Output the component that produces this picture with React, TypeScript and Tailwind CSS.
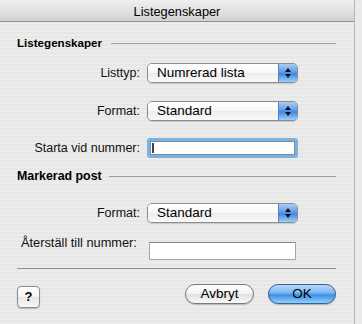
import React from "react";

const font = { fontFamily: '"Liberation Sans", Arial, sans-serif' };

function Popup({ text }: { text: string }) {
  return (
    <div className="flex h-[20px] w-[151px] rounded-[5px] border border-[#8c8c8c] overflow-hidden shadow-[0_1px_1px_rgba(0,0,0,0.15)]">
      <div className="flex-1 flex items-center pl-[9px] text-[13.5px] text-black bg-[linear-gradient(#ffffff,#f7f7f7_50%,#ececec_51%,#fafafa)]">
        {text}
      </div>
      <div className="w-[19px] flex flex-col items-center justify-center gap-[2px] border-l border-[#5a7fb6] bg-[linear-gradient(#a9cdf5,#5d9be8_45%,#3f86e3_55%,#9ad0fb)]">
        <div className="w-0 h-0 border-l-[3px] border-r-[3px] border-b-[4px] border-l-transparent border-r-transparent border-b-[#111]" />
        <div className="w-0 h-0 border-l-[3px] border-r-[3px] border-t-[4px] border-l-transparent border-r-transparent border-t-[#111]" />
      </div>
    </div>
  );
}

function Label({ children }: { children: React.ReactNode }) {
  return <div className="text-right text-[12.5px] text-[#111] whitespace-nowrap">{children}</div>;
}

export default function App() {
  return (
    <div className="w-[362px] h-[324px] flex bg-[#e9e9e9]" style={font}>
      <div className="w-[355px] h-full flex flex-col border-r border-[#b5b5b5] bg-[repeating-linear-gradient(0deg,#ececec_0px,#ececec_2px,#e7e7e7_2px,#e7e7e7_4px)]">
        <div className="h-[22px] shrink-0 flex items-center justify-center pt-[2px] border-b border-[#8e8e8e] bg-[linear-gradient(#efefef,#e2e2e2_50%,#d2d2d2)] text-[12.8px] text-black">
          Listegenskaper
        </div>
        <div className="flex flex-col pl-[17px] pr-[18px]">
          <div className="mt-[13px] h-[16px] flex items-center">
            <span className="font-bold text-[11.6px] text-black">Listegenskaper</span>
            <div className="flex-1 ml-[9px] h-px bg-[#9c9c9c]" />
          </div>

          <div className="mt-[12px] flex items-center">
            <div className="w-[123px]"><Label>Listtyp:</Label></div>
            <div className="ml-[7px]"><Popup text="Numrerad lista" /></div>
          </div>

          <div className="mt-[18px] flex items-center">
            <div className="w-[123px]"><Label>Format:</Label></div>
            <div className="ml-[7px]"><Popup text="Standard" /></div>
          </div>

          <div className="mt-[17px] flex items-center">
            <div className="w-[123px]"><Label>Starta vid nummer:</Label></div>
            <div className="ml-[7px] w-[151px] h-[20px] rounded-[3px] bg-[#80b0dc] p-[3px]">
              <div className="h-full bg-white border border-[#6d8fb5] flex items-center pl-[1px]">
                <div className="w-[2px] h-[10px] bg-[#444]" />
              </div>
            </div>
          </div>

          <div className="mt-[10px] h-[16px] flex items-center">
            <span className="font-bold text-[12.4px] text-black">Markerad post</span>
            <div className="flex-1 ml-[7px] h-px bg-[#9c9c9c]" />
          </div>

          <div className="mt-[19px] flex items-center">
            <div className="w-[123px]"><Label>Format:</Label></div>
            <div className="ml-[7px]"><Popup text="Standard" /></div>
          </div>

          <div className="mt-[19px] flex items-start">
            <div className="w-[132px] -mt-[7px] pl-[4px] text-[12.8px] text-[#111] leading-[15px] whitespace-nowrap">Återställ till nummer:</div>
            <div className="w-[147px] h-[18px] bg-white border border-[#a5a5a5] border-t-[#8a8a8a]" />
          </div>

          <div className="mt-[8px] h-px bg-[#8e8e8e]" />

          <div className="mt-[15px] flex items-start">
            <div className="mt-[2px] w-[23px] h-[22px] rounded-[4px] border border-[#8a8a8a] bg-[linear-gradient(#ffffff,#f4f4f4_50%,#e6e6e6_51%,#f6f6f6)] flex items-center justify-center font-bold text-[13px] text-black shadow-[0_1px_1px_rgba(0,0,0,0.2)]">
              ?
            </div>
            <div className="flex-1" />
            <div className="w-[69px] h-[20px] rounded-full border border-[#7a7a7a] bg-[linear-gradient(#ffffff,#f2f2f2_50%,#e0e0e0_51%,#f8f8f8)] flex items-center justify-center text-[13.5px] text-black shadow-[0_1px_1px_rgba(0,0,0,0.2)]">
              Avbryt
            </div>
            <div className="ml-[14px] w-[68px] h-[20px] rounded-full border border-[#3d5f96] bg-[linear-gradient(#b7daf8,#78b4ef_45%,#3f8de4_55%,#8fd0fb)] flex items-center justify-center text-[13.5px] text-black shadow-[0_1px_1px_rgba(0,0,0,0.25)]">
              OK
            </div>
          </div>
        </div>
      </div>
      <div className="flex-1 bg-[#eaeaea]" />
    </div>
  );
}
